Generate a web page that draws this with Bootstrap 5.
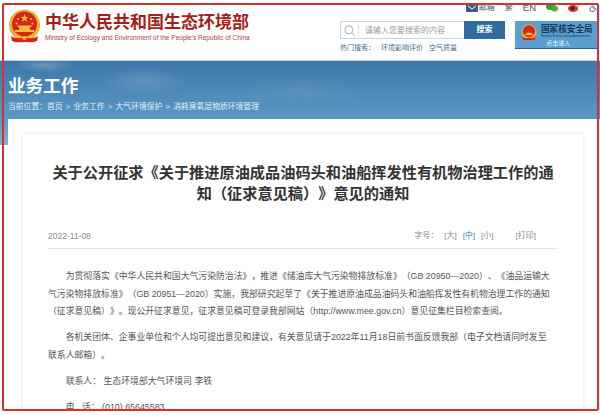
<!DOCTYPE html>
<html lang="zh-CN">
<head>
  <meta charset="UTF-8">
  <title>关于公开征求意见的通知</title>
  <link href="https://cdn.jsdelivr.net/npm/bootstrap@5.3.3/dist/css/bootstrap.min.css" rel="stylesheet">
  <style>
    html, body { height: 415px; overflow: hidden; background: #fff; }
    body { font-family: "Liberation Sans", "Noto Sans CJK SC", sans-serif; color: #444; text-spacing-trim: space-all; }
    .shot { position: relative; height: 411px; overflow: hidden; background: #fff; }
    .shot-frame { position: absolute; left: 2px; top: 3px; width: 597px; height: 408px; border: 2px solid #d8302c; border-radius: 2px; pointer-events: none; z-index: 5; }

    .site-head { height: 60px; padding: 9px 0 0 8px; }
    .logo-name { font-size: 17px; line-height: 20px; font-weight: 700; color: #a61e17; margin-top: 4px; }
    .logo-en { font-size: 6.55px; line-height: 8px; color: #a5483f; margin-top: 1px; white-space: nowrap; }
    .head-right { width: 260px; margin-left: auto; margin-top: -9px; }
    .top-links { height: 21px; font-size: 8px; line-height: 10px; color: #44586c; gap: 10px; padding: 3px 3px 0 0; }
    .top-en { font-size: 9.5px; }
    .search-wrap { width: 165px; height: 18px; border: 1px solid #c9d6e2; }
    .search-ico { width: 18px; border-right: 1px solid #dde; margin: 2px 0; }
    .search-wrap .form-control { font-size: 8px; color: #999; padding: 0 0 0 6px; border: 0; border-radius: 0; height: 16px; min-height: 0; background: transparent; }
    .search-wrap .form-control::placeholder { color: #9a9a9a; }
    .search-btn { width: 41px; height: 18px; margin: -1px -1px -1px 0; padding: 0; font-size: 8px; font-weight: 700; border: 0; border-radius: 0; background: #2f6b9c; color: #fff; }
    .hot-words { font-size: 7px; line-height: 10px; color: #3f6f93; gap: 6px; margin-top: 4px; }
    .nnsa-btn { width: 82px; height: 28px; margin-left: 10px; background: #5a9fd0; border-bottom: 1px solid #2d5f8c; padding: 3px 0 0 6px; overflow: hidden; }
    .nnsa-name { font-size: 8.6px; line-height: 10px; font-weight: 700; color: #15365a; white-space: nowrap; }
    .nnsa-en { font-size: 2.9px; line-height: 4px; color: #173a5c; white-space: nowrap; }
    .nnsa-go { font-size: 6px; line-height: 8px; color: #e9f3fa; text-align: center; margin-left: -17px; margin-top: 1px; }

    .band { height: 85px; padding: 14px 0 0 8px; border-top: 1px solid #c3d3e0;
      background:
        radial-gradient(ellipse 30px 8px at 45px 4px, rgba(255,255,255,.22), transparent),
        radial-gradient(ellipse 45px 14px at 145px 20px, rgba(255,255,255,.14), transparent),
        radial-gradient(ellipse 80px 14px at 300px 30px, rgba(255,255,255,.07), transparent),
        linear-gradient(#3c76a9, #5b9ac5 70%, #82b1d6); }
    .band-title { font-size: 17.6px; line-height: 22px; font-weight: 700; color: #fff; margin: 0; }
    .crumbs { font-size: 7.8px; line-height: 12px; color: #e2edf5; margin-top: 4px; white-space: nowrap; word-spacing: 1px; }

    .content-wrap { margin: -26px 0 0 8px; padding: 15px 17px 0 15px; background: #fff; }
    .doc-card { height: 290px; padding: 28px 25px 0 25px; background: #fff; box-shadow: 0 0 4px rgba(0,0,0,.12); }
    .doc-title { font-size: 15.2px; line-height: 21px; font-weight: 700; color: #333; text-align: center; margin: 0; }
    .doc-meta { height: 19px; margin-top: 26px; border-bottom: 1px solid #dfe7ef; font-size: 8.5px; line-height: 12px; color: #8a8a8a; }
    .doc-tools { font-size: 8px; gap: 6px; padding-right: 22px; }
    .doc-tools .on { color: #3a7fbf; }
    .doc-body { margin: 19px 4px 0 0; font-size: 8.85px; line-height: 17.5px; color: #555; }
    .doc-body p { text-indent: 2em; margin: 0 0 8.500px; }
  </style>
</head>
<body>
<div class="shot">
  <div class="shot-frame"></div>

  <header class="site-head d-flex">
    <svg width="33" height="35" viewBox="0 0 33 35" class="flex-shrink-0">
      <circle cx="16.5" cy="16" r="15.5" fill="#e9b233"/>
      <circle cx="16.5" cy="15" r="12.5" fill="#d6261c"/>
      <path d="M16.5 5l1 3h3l-2.500 1.800 1 3-2.500-1.900-2.500 1.900 1-3L12.500 8h3z" fill="#f6c945"/>
      <circle cx="10" cy="10" r="1" fill="#f6c945"/><circle cx="23" cy="10" r="1" fill="#f6c945"/>
      <circle cx="8.500" cy="14.500" r="1" fill="#f6c945"/><circle cx="24.500" cy="14.500" r="1" fill="#f6c945"/>
      <path d="M7 21h19v2H7zM11 18h11v3H11zM9.500 16.500h14v1.500h-14z" fill="#f0bd3c"/>
      <path d="M3 27c4 3 8 2 13.500 2S26 30 30 27l-1 5c-4 2-8 1-12.500 1S8 34 4 32z" fill="#d6261c"/>
      <circle cx="16.500" cy="29" r="2" fill="#f0bd3c"/>
    </svg>
    <div class="ms-1">
      <div class="logo-name">中华人民共和国生态环境部</div>
      <div class="logo-en">Ministry of Ecology and Environment of the People's Republic of China</div>
    </div>
    <div class="head-right">
      <div class="top-links d-flex justify-content-end align-items-start">
        <span class="d-flex align-items-center" style="gap:1px">
          <svg width="12" height="8" viewBox="0 0 12 8"><rect width="12" height="8" rx="1" fill="#2c5f92"/><path d="M2 2l4 3 4-3" fill="none" stroke="#fff"/></svg>邮箱</span>
        <span>繁</span>
        <span class="top-en">EN</span>
        <svg width="12" height="9" viewBox="0 0 12 9"><ellipse cx="4.500" cy="3.500" rx="4.500" ry="3.500" fill="#2fa02f"/><ellipse cx="8.500" cy="5.500" rx="3.500" ry="3" fill="#3cb63c"/></svg>
        <svg width="11" height="9" viewBox="0 0 11 9"><ellipse cx="5" cy="5.500" rx="5" ry="3.500" fill="#d8302c"/><circle cx="4.500" cy="5.500" r="2" fill="#2a2a2a"/><path d="M7 1a3 3 0 0 1 3.500 3" fill="none" stroke="#f0a030"/></svg>
        <svg width="8" height="9" viewBox="0 0 8 10"><circle cx="4" cy="1" r="1" fill="#2c5f92"/><path d="M4 2.500v3h2.500l1 2.500M3 4a2.800 2.800 0 1 0 3 3.500" fill="none" stroke="#2c5f92"/></svg>
      </div>
      <div class="d-flex">
        <div>
          <div class="search-wrap d-flex align-items-center">
            <div class="search-ico d-flex align-items-center justify-content-center flex-shrink-0">
              <svg width="11" height="11" viewBox="0 0 11 11"><circle cx="4.800" cy="4.800" r="4" fill="none" stroke="#aab"/><path d="M8 8l2.500 2.500" stroke="#aab"/></svg>
            </div>
            <input class="form-control" type="text" placeholder="请输入您要搜索的内容">
            <button class="btn search-btn flex-shrink-0" type="button">搜索</button>
          </div>
          <div class="hot-words d-flex">
            <span>热门搜索：</span><span>环境影响评价</span><span>空气质量</span>
          </div>
        </div>
        <div class="nnsa-btn d-flex gap-1">
          <svg width="16" height="17" viewBox="0 0 33 35" class="flex-shrink-0">
            <circle cx="16.500" cy="16" r="15.500" fill="#e9b233"/>
            <circle cx="16.500" cy="15" r="12.500" fill="#d6261c"/>
            <path d="M7 21h19v2H7zM11 18h11v3H11z" fill="#f0bd3c"/>
            <path d="M3 27c4 3 8 2 13.500 2S26 30 30 27l-1 5c-4 2-8 1-12.500 1S8 34 4 32z" fill="#d6261c"/>
          </svg>
          <div>
            <div class="nnsa-name">国家核安全局</div>
            <div class="nnsa-en">National Nuclear Safety Administration</div>
            <div class="nnsa-go">点击进入</div>
          </div>
        </div>
      </div>
    </div>
  </header>

  <section class="band">
    <h1 class="band-title">业务工作</h1>
    <div class="crumbs">当前位置：首页 &gt; 业务工作 &gt; 大气环境保护 &gt; 消耗臭氧层物质环境管理</div>
  </section>

  <div class="content-wrap">
    <article class="doc-card">
      <h2 class="doc-title">关于公开征求《关于推进原油成品油码头和油船挥发性有机物治理工作的通知（征求意见稿）》意见的通知</h2>
      <div class="doc-meta d-flex justify-content-between">
        <span>2022-11-08</span>
        <span class="doc-tools d-flex">
          <span class="me-n1">字号：</span><span>[大]</span><span class="on">[中]</span><span>[小]</span><span class="ms-3">[打印]</span>
        </span>
      </div>
      <div class="doc-body">
        <p>为贯彻落实《中华人民共和国大气污染防治法》，推进《储油库大气污染物排放标准》（GB 20950—2020）、《油品运输大气污染物排放标准》（GB 20951—2020）实施，我部研究起草了《关于推进原油成品油码头和油船挥发性有机物治理工作的通知（征求意见稿）》。现公开征求意见，征求意见稿可登录我部网站（http://www.mee.gov.cn）意见征集栏目检索查阅。</p>
        <p>各机关团体、企事业单位和个人均可提出意见和建议，有关意见请于2022年11月18日前书面反馈我部（电子文档请同时发至联系人邮箱）。</p>
        <p>联系人：&nbsp;生态环境部大气环境司 李铁</p>
        <p>电&nbsp;&nbsp;&nbsp;话：&nbsp;(010) 65645583</p>
      </div>
    </article>
  </div>
</div>
<script src="https://cdn.jsdelivr.net/npm/bootstrap@5.3.3/dist/js/bootstrap.bundle.min.js"></script>
</body>
</html>
